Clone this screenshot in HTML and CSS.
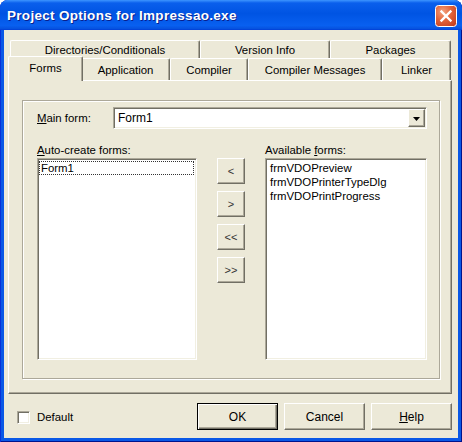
FILE: index.html
```html
<!DOCTYPE html>
<html>
<head>
<meta charset="utf-8">
<link rel="stylesheet" href="styles.css">
</head>
<body>
<div class="window">
  <div class="titlebar">
    <span class="title">Project Options for Impressao.exe</span>
    <div class="close">
      <svg width="22" height="22" viewBox="0 0 22 22">
        <defs>
          <radialGradient id="cg" cx="0.35" cy="0.3" r="0.9">
            <stop offset="0" stop-color="#F3A27E"/>
            <stop offset="0.45" stop-color="#E3643A"/>
            <stop offset="1" stop-color="#C1391A"/>
          </radialGradient>
        </defs>
        <rect x="0.5" y="0.5" width="21" height="21" rx="3" fill="url(#cg)" stroke="#fff"/>
        <path d="M6.5 6.5 L15.5 15.5 M15.5 6.5 L6.5 15.5" stroke="#fff" stroke-width="2.4" stroke-linecap="square"/>
      </svg>
    </div>
  </div>
  <div class="body">
    <div class="tabs">
      <div class="tabrow back">
        <div class="tab tab-dirs">Directories/Conditionals</div>
        <div class="tab tab-ver">Version Info</div>
        <div class="tab tab-pkg">Packages</div>
      </div>
      <div class="tabrow front">
        <div class="tab tab-forms active">Forms</div>
        <div class="tab tab-app">Application</div>
        <div class="tab tab-comp">Compiler</div>
        <div class="tab tab-msg">Compiler Messages</div>
        <div class="tab tab-link">Linker</div>
      </div>
      <div class="panel">
        <div class="frame">
          <div class="main-row">
            <span class="main-lbl"><u>M</u>ain form:</span>
            <div class="combo">
              <span class="combo-text">Form1</span>
              <span class="combo-btn">
                <svg width="7" height="4" viewBox="0 0 7 4"><path d="M0 0 H7 L3.5 4 Z" fill="#000"/></svg>
              </span>
            </div>
          </div>
          <div class="lists">
            <div class="col col-left">
              <div class="lbl"><u>A</u>uto-create forms:</div>
              <div class="listbox">
                <div class="item focus">Form1</div>
              </div>
            </div>
            <div class="movebtns">
              <div class="btn small">&lt;</div>
              <div class="btn small">&gt;</div>
              <div class="btn small">&lt;&lt;</div>
              <div class="btn small">&gt;&gt;</div>
            </div>
            <div class="col col-right">
              <div class="lbl">Available <u>f</u>orms:</div>
              <div class="listbox">
                <div class="item">frmVDOPreview</div>
                <div class="item">frmVDOPrinterTypeDlg</div>
                <div class="item">frmVDOPrintProgress</div>
              </div>
            </div>
          </div>
        </div>
      </div>
    </div>
    <div class="footer">
      <div class="check"><span class="box"></span>Default</div>
      <div class="buttons">
        <div class="btn big default">OK</div>
        <div class="btn big">Cancel</div>
        <div class="btn big"><u>H</u>elp</div>
      </div>
    </div>
  </div>
</div>
</body>
</html>
```

FILE: styles.css
```css
html, body {
  margin: 0;
  padding: 0;
  background: #fff;
}
body {
  font-family: "Liberation Sans", Arial, sans-serif;
  font-size: 11.4px;
  color: #000;
}
.window {
  width: 462px;
  height: 442px;
  box-sizing: border-box;
  display: flex;
  flex-direction: column;
  background: #0A58E6;
  border-radius: 8px 8px 0 0;
  overflow: hidden;
  box-shadow: inset 1px 0 #0831D9, inset -1px 0 #00138C, inset 0 -1px #00138C;
}
.titlebar {
  height: 30px;
  flex: none;
  display: flex;
  align-items: center;
  justify-content: space-between;
  padding: 0 5px 0 7px;
  background: linear-gradient(180deg, #3D95FF 0%, #0A5FEC 10%, #0054E3 45%, #0860F0 85%, #0653E0 95%, #003DD7 100%);
}
.title {
  color: #fff;
  font-weight: bold;
  font-size: 13.5px;
  letter-spacing: 0.3px;
  text-shadow: 1px 1px #0A1F8C;
  padding-top: 1px;
}
.close {
  width: 22px;
  height: 22px;
  margin-top: 2px;
}
.close svg { display: block; }
.body {
  flex: 1;
  margin: 0 4px 4px 4px;
  background: #ECE9D8;
  padding: 10px 6px 0 4px;
  display: flex;
  flex-direction: column;
}
.tabrow {
  display: flex;
  padding-left: 2px;
}
.tabrow.back { height: 18px; }
.tabrow.front {
  height: 22px;
  align-items: flex-end;
  position: relative;
  z-index: 1;
}
.tab {
  box-sizing: border-box;
  height: 100%;
  display: flex;
  align-items: center;
  justify-content: center;
  background: #ECE9D8;
  border-top: 1px solid #fff;
  border-left: 1px solid #fff;
  border-right: 1px solid #716F64;
  box-shadow: inset -1px 0 #ACA899;
  border-radius: 2px 2px 0 0;
  white-space: nowrap;
}
.tab-dirs { width: 190px; }
.tab-ver { width: 130px; }
.tab-pkg { width: 121px; }
.tab-forms { width: 71px; }
.tab-app { width: 89px; }
.tab-comp { width: 78px; }
.tab-msg { width: 134px; }
.tab-link { width: 69px; }
.tab.active {
  width: 75px;
  height: 25px;
  margin: 0 -2px -1px -2px;
  padding-bottom: 3px;
  position: relative;
  z-index: 2;
}
.panel {
  height: 314px;
  box-sizing: border-box;
  border: 1px solid;
  border-color: #fff #716F64 #716F64 #fff;
  box-shadow: inset -1px -1px #ACA899;
  padding: 19px 11px 0 13px;
}
.frame {
  height: 279px;
  box-sizing: border-box;
  border: 1px solid #ACA899;
  box-shadow: inset 1px 1px #fff, 1px 1px #fff;
  padding: 6px 12px 0 14px;
}
.main-row {
  display: flex;
  align-items: center;
  height: 22px;
}
.main-lbl {
  width: 76px;
  flex: none;
}
.combo, .listbox, .box {
  box-sizing: border-box;
  background: #fff;
  border: 1px solid;
  border-color: #ACA899 #fff #fff #ACA899;
  box-shadow: inset 1px 1px #716F64, inset -1px -1px #F1EFE2;
}
.combo {
  flex: 1;
  height: 22px;
  display: flex;
  align-items: stretch;
  padding: 1px;
}
.combo-text {
  flex: 1;
  padding-left: 3px;
  display: flex;
  align-items: center;
  font-size: 12px;
}
.combo-btn, .btn {
  box-sizing: border-box;
  background: #ECE9D8;
  border: 1px solid;
  border-color: #fff #716F64 #716F64 #fff;
  box-shadow: inset -1px -1px #ACA899;
  display: flex;
  align-items: center;
  justify-content: center;
}
.combo-btn {
  width: 17px;
  padding-top: 1px;
}
.lists {
  display: flex;
  margin-top: 15px;
}
.col { display: flex; flex-direction: column; }
.col-left { width: 160px; }
.col-right { width: 162px; margin-left: 20px; }
.lbl {
  height: 13px;
  line-height: 13px;
  margin-bottom: 1px;
}
.listbox {
  height: 202px;
  padding: 2px;
}
.item {
  height: 14px;
  line-height: 14px;
  padding-left: 2px;
  white-space: nowrap;
}
.item.focus {
  box-sizing: border-box;
  border: 1px dotted #333;
  line-height: 12px;
  margin-left: -1px;
  padding-left: 1px;
}
.movebtns {
  display: flex;
  flex-direction: column;
  gap: 7px;
  margin-left: 20px;
  padding-top: 14px;
  width: 28px;
}
.btn.small {
  width: 28px;
  height: 26px;
  font-size: 11px;
  color: #333;
}
.footer {
  margin-top: 9px;
  height: 27px;
  display: flex;
  align-items: center;
  justify-content: space-between;
  padding-left: 9px;
}
.check {
  display: flex;
  align-items: center;
  margin-top: 1px;
}
.box {
  width: 13px;
  height: 13px;
  margin-right: 7px;
}
.buttons {
  display: flex;
  gap: 6px;
}
.btn.big {
  width: 81px;
  height: 27px;
  font-size: 12px;
}
.btn.default {
  border: 1px solid #000;
  box-shadow: inset 1px 1px #fff, inset -1px -1px #716F64, inset -2px -2px #ACA899;
}
```
